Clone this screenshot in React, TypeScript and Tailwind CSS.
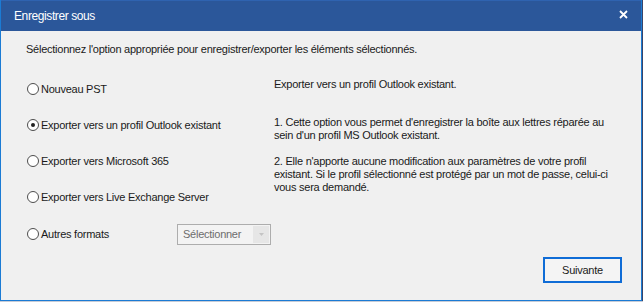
import React from "react";

const font = { fontFamily: '"Liberation Sans", Arial, sans-serif' };

function Radio({ checked, label }: { checked?: boolean; label: string }) {
  return (
    <div className="flex items-center h-[20px]">
      <span className="w-[12px] h-[12px] rounded-full border border-[#4d4d4d] bg-white flex items-center justify-center ml-[2px]">
        {checked && <span className="w-[4px] h-[4px] rounded-full bg-[#222222]" />}
      </span>
      <span className="ml-[2px] text-[11px] tracking-[-0.25px] text-[#1a1a1a] leading-[14px]">{label}</span>
    </div>
  );
}

export default function App() {
  return (
    <div className="w-[643px] h-[302px] bg-[#4a5576] flex flex-col overflow-hidden" style={font}>
      <div className="flex h-[301px]">
        <div className="w-[642px] h-[301px] flex flex-col border-l border-r border-b border-[#1b7bd4] bg-[#f0f0f0]">
          <div className="h-[31px] bg-[#2b579a] border-t border-[#2f63b0] flex items-center justify-between pl-[13px] pr-[13px]">
            <span className="text-white text-[12px] tracking-[-0.4px]">Enregistrer sous</span>
            <svg width="9" height="9" viewBox="0 0 9 9" className="mb-[4px]">
              <path d="M1 1L8 8M8 1L1 8" stroke="white" strokeWidth="1.8" />
            </svg>
          </div>
          <div className="flex-1 flex flex-col pl-[25px] pr-[19px] pt-[11px] pb-[17px] text-[#1a1a1a]">
            <p className="text-[11px] tracking-[-0.25px] leading-[14px]">
              Sélectionnez l'option appropriée pour enregistrer/exporter les éléments sélectionnés.
            </p>
            <div className="flex mt-[22px]">
              <div className="w-[249px] -ml-[1px] pt-[1px] flex flex-col gap-[16px]">
                <Radio label="Nouveau PST" />
                <Radio checked label="Exporter vers un profil Outlook existant" />
                <Radio label="Exporter vers Microsoft 365" />
                <Radio label="Exporter vers Live Exchange Server" />
                <div className="flex items-center">
                  <div className="w-[152px]">
                    <Radio label="Autres formats" />
                  </div>
                  <div className="w-[94px] h-[21px] border border-[#adadad] bg-[#f3f3f3] flex items-center p-[1px] mt-[1px]">
                    <span className="flex-1 pl-[4px] text-[11px] tracking-[-0.25px] text-[#6d6d6d]">Sélectionner</span>
                    <span className="w-[16px] h-full bg-[#e6e6e6] flex items-center justify-center">
                      <svg width="5" height="3" viewBox="0 0 5 3"><path d="M0 0H5L2.5 3Z" fill="#c4c4c4" /></svg>
                    </span>
                  </div>
                </div>
              </div>
              <div className="w-[345px] text-[11px] tracking-[-0.25px] leading-[13px]">
                <p>Exporter vers un profil Outlook existant.</p>
                <p className="mt-[25px]">
                  1. Cette option vous permet d'enregistrer la boîte aux lettres réparée au sein d'un profil MS Outlook existant.
                </p>
                <p className="mt-[13px]">
                  2. Elle n'apporte aucune modification aux paramètres de votre profil existant. Si le profil sélectionné est protégé par un mot de passe, celui-ci vous sera demandé.
                </p>
              </div>
            </div>
            <div className="flex-1" />
            <div className="flex justify-end">
              <button className="w-[79px] h-[26px] border-2 border-[#0f6cd6] bg-[#f4f4f4] text-[11px] tracking-[-0.25px] text-[#1a1a1a]">
                Suivante
              </button>
            </div>
          </div>
        </div>
        <div className="flex-1 bg-[#3a4468]" />
      </div>
      <div className="h-[1px] bg-[#c8ccd6]" />
    </div>
  );
}
